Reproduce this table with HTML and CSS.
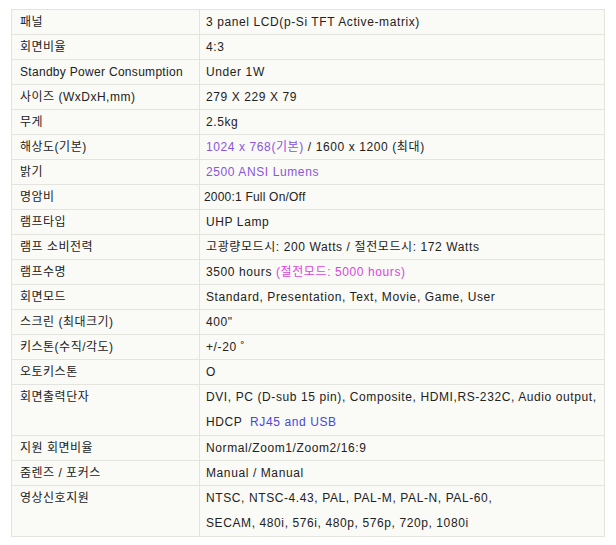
FILE: index.html
```html
<!DOCTYPE html>
<html lang="ko">
<head>
<meta charset="utf-8">
<link rel="stylesheet" href="styles.css">
</head>
<body>
<table class="spec">
  <tr><th>패널</th><td>3 panel LCD(p-Si TFT Active-matrix)</td></tr>
  <tr><th>회면비율</th><td>4:3</td></tr>
  <tr><th class="latin">Standby Power Consumption</th><td>Under 1W</td></tr>
  <tr><th>사이즈 (WxDxH,mm)</th><td>279 X 229 X 79</td></tr>
  <tr><th>무게</th><td>2.5kg</td></tr>
  <tr><th>해상도(기본)</th><td><span class="purple">1024 x 768(기본)</span> / 1600 x 1200 (최대)</td></tr>
  <tr><th>밝기</th><td><span class="purple">2500 ANSI Lumens</span></td></tr>
  <tr><th>명암비</th><td class="tight">2000:1 Full On/Off</td></tr>
  <tr><th>램프타입</th><td>UHP Lamp</td></tr>
  <tr><th>램프 소비전력</th><td>고광량모드시: 200 Watts / 절전모드시: 172 Watts</td></tr>
  <tr><th>램프수명</th><td>3500 hours <span class="pink">(절전모드: 5000 hours)</span></td></tr>
  <tr><th>회면모드</th><td>Standard, Presentation, Text, Movie, Game, User</td></tr>
  <tr><th>스크린 (최대크기)</th><td>400"</td></tr>
  <tr><th>키스톤(수직/각도)</th><td>+/-20 ˚</td></tr>
  <tr><th>오토키스톤</th><td>O</td></tr>
  <tr class="double"><th>회면출력단자</th><td>DVI, PC (D-sub 15 pin), Composite, HDMI,RS-232C, Audio output,<br>HDCP &nbsp;<span class="blue">RJ45 and USB</span></td></tr>
  <tr><th>지원 회면비율</th><td>Normal/Zoom1/Zoom2/16:9</td></tr>
  <tr><th>줌렌즈 / 포커스</th><td>Manual / Manual</td></tr>
  <tr class="double"><th>영상신호지원</th><td>NTSC, NTSC-4.43, PAL, PAL-M, PAL-N, PAL-60,<br>SECAM, 480i, 576i, 480p, 576p, 720p, 1080i</td></tr>
</table>
</body>
</html>
```

FILE: styles.css
```css
html, body {
  margin: 0;
  padding: 0;
  background: #ffffff;
}

body {
  padding: 9px 0 0 11px;
  font-family: "Liberation Sans", "Noto Sans CJK KR", sans-serif;
  font-size: 12px;
  color: #222222;
}

.spec {
  border-collapse: collapse;
  width: 594px;
  background: #fafaf7;
  border: 1px solid #e4e4df;
}

.spec th,
.spec td {
  border: 1px solid #e4e4df;
  padding: 0 0 0 8px;
  height: 24px;
  line-height: 24px;
  text-align: left;
  vertical-align: top;
  font-weight: normal;
  white-space: nowrap;
}

.spec .double th,
.spec .double td {
  line-height: 25px;
}

.spec th {
  width: 179px;
  letter-spacing: 0.5px;
}

.spec th.latin {
  letter-spacing: 0.3px;
}

.spec td {
  padding-left: 6px;
  letter-spacing: 0.6px;
}

.spec .tight {
  padding-left: 4px;
  letter-spacing: 0.2px;
}

.purple { color: #8a55dd; }
.pink { color: #dd44dd; }
.blue { color: #4848dd; }
```
